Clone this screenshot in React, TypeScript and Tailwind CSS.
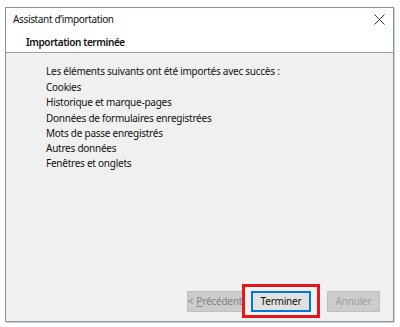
import React from "react";

export default function App() {
  const items = [
    "Cookies",
    "Historique et marque-pages",
    "Données de formulaires enregistrées",
    "Mots de passe enregistrés",
    "Autres données",
    "Fenêtres et onglets",
  ];
  return (
    <div
      className="w-[400px] h-[327px] bg-white pt-[7px] pl-[5px]"
      style={{ fontFamily: '"Noto Sans", "Open Sans", sans-serif' }}
    >
      <div className="relative w-[389px] h-[315px] border border-[#8795a0] flex flex-col bg-[#f0f0f0] shadow-[1px_1px_0_#c9d3da]">
        <div className="bg-white h-[45px] border-b border-[#a0a0a0] flex flex-col">
          <div className="flex items-center justify-between h-[22px] pl-[7px] pr-[7px] pt-[1px]">
            <span className="text-[10px] text-[#111] tracking-[-0.35px]">Assistant d’importation</span>
            <svg width="11" height="11" viewBox="0 0 11 11" className="mr-[1px]">
              <path d="M0.5 0.5 L10.5 10.5 M10.5 0.5 L0.5 10.5" stroke="#333" strokeWidth="1" />
            </svg>
          </div>
          <div className="pl-[20px] pt-[5px] text-[10px] font-semibold text-[#111] tracking-[-0.4px]">
            Importation terminée
          </div>
        </div>
        <div className="flex-1 pl-[40px] pt-[11px] flex flex-col text-[10px] text-[#111] tracking-[-0.25px] leading-[15.2px]">
          <div className="mb-[1px]">Les éléments suivants ont été importés avec succès :</div>
          {items.map((t) => (
            <div key={t}>{t}</div>
          ))}
        </div>
        <div className="flex justify-end items-center gap-[8px] pr-[13px] pb-[9px] text-[10px] tracking-[-0.2px]">
          <div className="w-[56px] h-[21px] bg-[#cccccc] border border-[#bfbfbf] text-[#838383] flex items-center justify-center">
            &lt; <span className="underline ml-[3px]">P</span>récédent
          </div>
          <div className="relative">
            <div className="w-[60px] h-[21px] bg-[#e1e1e1] border border-[#0078d7] text-[#111] flex items-center justify-center shadow-[inset_0_0_0_1px_#0078d7]">
              Terminer
            </div>
            <div className="absolute -left-[9px] -top-[7px] w-[78px] h-[34px] border-[3px] border-[#e4161c] pointer-events-none" />
          </div>
          <div className="w-[53px] h-[21px] bg-[#cccccc] border border-[#bfbfbf] text-[#a0a0a0] flex items-center justify-center ml-[8px]">
            Annuler
          </div>
        </div>
      </div>
    </div>
  );
}
